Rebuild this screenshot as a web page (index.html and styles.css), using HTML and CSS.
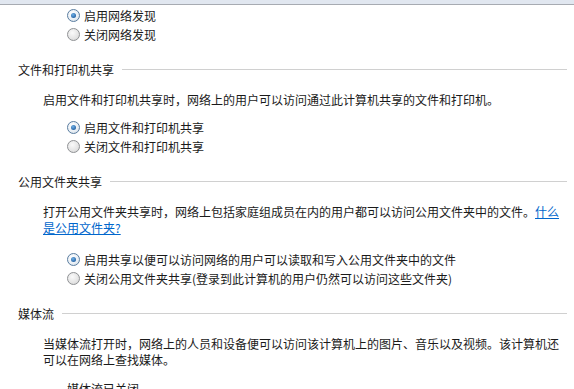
FILE: index.html
```html
<!DOCTYPE html>
<html lang="zh-CN">
<head>
    <meta charset="UTF-8">
    <meta name="viewport" content="width=device-width, initial-scale=1.0">
    <title>高级共享设置</title>
    <link rel="stylesheet" href="styles.css">
</head>
<body>

    <div class="topbar"></div>

    <!-- 网络发现 -->
    <div class="options first">
        <label class="option"><span class="radio checked"></span>启用网络发现</label>
        <label class="option"><span class="radio"></span>关闭网络发现</label>
    </div>

    <!-- 文件和打印机共享 -->
    <div class="group-title"><span>文件和打印机共享</span></div>
    <p class="desc">启用文件和打印机共享时，网络上的用户可以访问通过此计算机共享的文件和打印机。</p>
    <div class="options">
        <label class="option"><span class="radio checked"></span>启用文件和打印机共享</label>
        <label class="option"><span class="radio"></span>关闭文件和打印机共享</label>
    </div>

    <!-- 公用文件夹共享 -->
    <div class="group-title"><span>公用文件夹共享</span></div>
    <p class="desc">打开公用文件夹共享时，网络上包括家庭组成员在内的用户都可以访问公用文件夹中的文件。<a href="#">什么是公用文件夹?</a></p>
    <div class="options wide-gap">
        <label class="option"><span class="radio checked"></span>启用共享以便可以访问网络的用户可以读取和写入公用文件夹中的文件</label>
        <label class="option"><span class="radio"></span>关闭公用文件夹共享(登录到此计算机的用户仍然可以访问这些文件夹)</label>
    </div>

    <!-- 媒体流 -->
    <div class="group-title"><span>媒体流</span></div>
    <p class="desc">当媒体流打开时，网络上的人员和设备便可以访问该计算机上的图片、音乐以及视频。该计算机还可以在网络上查找媒体。</p>
    <div class="status">媒体流已关闭</div>

</body>
</html>
```

FILE: styles.css
```css
/* General */
body {
    margin: 0;
    background: #fff;
    color: #1a1a1a;
    font-family: "Noto Sans CJK SC", "Microsoft YaHei", sans-serif;
    font-size: 12px;
    overflow: hidden;
}

/* Window strip at the top */
.topbar {
    height: 4px;
    background: #e1e7f0;
    border-bottom: 1px solid #a7abb2;
}

/* Radio groups */
.options {
    margin: 10px 0 0 67px;
}

.options.first {
    margin-top: 1px;
}

.options.wide-gap {
    margin-top: 14px;
}

.option {
    display: flex;
    align-items: center;
    height: 19px;
    white-space: nowrap;
}

.radio {
    width: 11px;
    height: 11px;
    margin-right: 4px;
    border: 1px solid #8f9194;
    border-radius: 50%;
    background: radial-gradient(circle at 40% 35%, #fafafa 0%, #e4e4e4 60%, #cfcfcf 100%);
    display: flex;
    align-items: center;
    justify-content: center;
    flex-shrink: 0;
}

.radio.checked {
    border-color: #5a7da0;
    background: radial-gradient(circle at 40% 35%, #ffffff 0%, #e8eef4 60%, #c6d2de 100%);
}

.radio.checked::after {
    content: "";
    width: 5px;
    height: 5px;
    border-radius: 50%;
    background: radial-gradient(circle at 40% 35%, #6fb0e6 0%, #2a67a8 70%, #1d4f86 100%);
}

/* Section titles with rule */
.group-title {
    display: flex;
    align-items: center;
    height: 16px;
    margin: 17px 7px 0 18px;
}

.group-title::after {
    content: "";
    flex: 1;
    height: 1px;
    margin-left: 8px;
    background: #d0d0d0;
}

/* Descriptions */
.desc {
    width: 520px;
    margin: 15px 0 0 43px;
    line-height: 16px;
}

.desc a {
    color: #0066cc;
}

.status {
    margin: 13px 0 0 67px;
    line-height: 16px;
}
```
